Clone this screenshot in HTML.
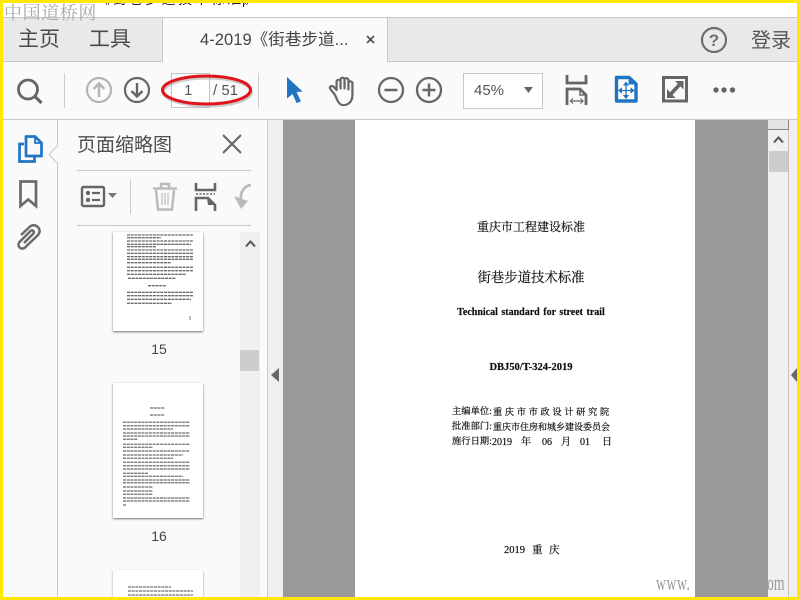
<!DOCTYPE html>
<html><head><meta charset="utf-8">
<style>
html,body{margin:0;padding:0}
body{width:800px;height:600px;overflow:hidden;position:relative;background:#fafafa;font-family:"Liberation Sans","Noto Sans CJK SC",sans-serif;color:#444}
.a{position:absolute}
.s{font-family:"Liberation Serif","Noto Serif CJK SC",serif;color:#111;white-space:nowrap;-webkit-text-stroke:.2px #111;filter:blur(.25px)}
svg{position:absolute;overflow:visible}
</style></head><body>
<!-- top band -->
<div class="a" style="left:0;top:0;width:800px;height:17px;background:#fff"></div>
<div class="a" style="left:0;top:17px;width:800px;height:1px;background:#c8c8c8"></div>
<div class="a" style="left:96px;top:-9px;font-size:14px;line-height:16px;color:#222;white-space:nowrap;letter-spacing:2.400px">《街巷步道技术标准》</div>
<div class="a" style="left:243px;top:3px;width:1px;height:4px;background:#222"></div>
<!-- tab bar -->
<div class="a" style="left:0;top:18px;width:800px;height:43px;background:#e9e9e9"></div>
<div class="a" style="left:0;top:61px;width:800px;height:1px;background:#c8c8c8"></div>
<div class="a" style="left:162px;top:18px;width:226px;height:44px;background:#fafafa;border-left:1px solid #c8c8c8;border-right:1px solid #c8c8c8;box-sizing:border-box"></div>
<div class="a" style="left:4px;top:3px;font-size:18px;line-height:20px;color:#a8a8a8;letter-spacing:.6px;font-family:'Liberation Serif','Noto Serif CJK SC',serif;white-space:nowrap">中国道桥网</div>
<div class="a" style="left:18px;top:26px;font-size:21px;line-height:28px;color:#4a4a4a">主页</div>
<div class="a" style="left:89px;top:26px;font-size:21px;line-height:28px;color:#4a4a4a">工具</div>
<div class="a" style="left:200px;top:29px;font-size:16.600px;line-height:22px;color:#444;white-space:nowrap">4-2019《街巷步道...</div>
<svg style="left:366px;top:35px" width="10" height="10"><path d="M1 1L8 8M8 1L1 8" stroke="#555" stroke-width="1.800"/></svg>
<svg style="left:701px;top:27px" width="27" height="27"><circle cx="13" cy="13" r="12" fill="none" stroke="#6e6e6e" stroke-width="2.200"/><text x="13" y="19" font-size="17" font-weight="bold" text-anchor="middle" fill="#6e6e6e" font-family="Liberation Sans">?</text></svg>
<div class="a" style="left:751px;top:27px;font-size:20px;line-height:28px;color:#555;white-space:nowrap">登录</div>
<!-- toolbar -->
<div class="a" style="left:0;top:119px;width:800px;height:1px;background:#c8c8c8"></div>
<svg style="left:16px;top:78px" width="26" height="26"><circle cx="12" cy="11.500" r="9.500" fill="none" stroke="#666" stroke-width="2.800"/><path d="M18.500 18L25.500 25" stroke="#666" stroke-width="3.200"/></svg>
<div class="a" style="left:64px;top:73px;width:1px;height:35px;background:#ccc"></div>
<svg style="left:86px;top:77px" width="26" height="26"><circle cx="13" cy="13" r="12" fill="none" stroke="#b4b4b4" stroke-width="2.200"/><path d="M13 20V6.500M7.500 12L13 6.500L18.500 12" fill="none" stroke="#b4b4b4" stroke-width="2.400"/></svg>
<svg style="left:124px;top:77px" width="26" height="26"><circle cx="13" cy="13" r="12" fill="none" stroke="#666" stroke-width="2.200"/><path d="M13 6V19.500M7.500 14L13 19.500L18.500 14" fill="none" stroke="#666" stroke-width="2.400"/></svg>
<div class="a" style="left:171px;top:73px;width:37px;height:33px;background:#fff;border:1px solid #c4c4c4"></div>
<div class="a" style="left:184px;top:81px;font-size:15px;line-height:20px;color:#555">1</div>
<div class="a" style="left:213px;top:81px;font-size:15px;line-height:20px;color:#555;white-space:nowrap">/ 51</div>
<svg style="left:160px;top:74px" width="94" height="34"><ellipse cx="47.500" cy="18" rx="44" ry="14" fill="none" stroke="#999" stroke-width="3" opacity=".5"/><ellipse cx="46.500" cy="16" rx="44" ry="14" fill="none" stroke="#e0141c" stroke-width="3"/></svg>
<div class="a" style="left:258px;top:73px;width:1px;height:35px;background:#ccc"></div>
<svg style="left:286px;top:76px" width="18" height="28"><path d="M1 1L16.500 15.500L10.500 16L15 25.500L10.500 27L6.500 18L1 22.500Z" fill="#1f74c4"/></svg>
<svg style="left:327px;top:76px" width="30" height="30"><g transform="scale(1.130 1.040)"><path d="M7 18L3 12.500C1.500 10.500 4 8.500 6 10.500L8.500 13.500V5.500C8.500 3 12 3 12 5.500V12V3.500C12 1 15.500 1 15.500 3.500V12V4C15.500 1.500 19 1.500 19 4V13V7C19 4.500 22.500 4.500 22.500 7V18C22.500 24 19.500 28 14.500 28C10.500 28 9 23 7 18Z" fill="none" stroke="#666" stroke-width="2" stroke-linejoin="round"/></g></svg>
<svg style="left:378px;top:77px" width="26" height="26"><circle cx="13" cy="13" r="12" fill="none" stroke="#666" stroke-width="2.300"/><path d="M6.500 13H19.500" stroke="#666" stroke-width="2.500"/></svg>
<svg style="left:416px;top:77px" width="26" height="26"><circle cx="13" cy="13" r="12" fill="none" stroke="#666" stroke-width="2.300"/><path d="M6.500 13H19.500M13 6.500V19.500" stroke="#666" stroke-width="2.500"/></svg>
<div class="a" style="left:463px;top:73px;width:78px;height:34px;background:#fff;border:1px solid #c8c8c8"></div>
<div class="a" style="left:474px;top:81px;font-size:15px;line-height:20px;color:#555">45%</div>
<svg style="left:524px;top:87px" width="10" height="7"><path d="M0 0H9L4.500 6Z" fill="#666"/></svg>
<svg style="left:565px;top:74px" width="24" height="32"><path d="M2 1V9H21V1" fill="none" stroke="#666" stroke-width="2.800"/><path d="M2 31V15H15L21 21V31" fill="none" stroke="#666" stroke-width="2.800"/><path d="M15 15V21H21" fill="none" stroke="#666" stroke-width="1.500"/><path d="M5.500 27H18M8 24.500L5.500 27L8 29.500M15.500 24.500L18 27L15.500 29.500" fill="none" stroke="#666" stroke-width="1.200"/></svg>
<svg style="left:614px;top:75px" width="24" height="28"><path d="M2.500 2.500H15L22 9V26H2.500Z" fill="#fff" stroke="#1f74c4" stroke-width="3.400" stroke-linejoin="round"/><path d="M15 2V9H22" fill="#1f74c4" stroke="#1f74c4" stroke-width="1"/><path d="M12 9V22M5.500 15.500H18.500" stroke="#1f74c4" stroke-width="1.300"/><path d="M12 6.500L8.800 10.500H15.200ZM12 24L8.800 20H15.200ZM4 15.500L8 12.300V18.700ZM20.500 15.500L16.500 12.300V18.700Z" fill="#1f74c4"/></svg>
<svg style="left:662px;top:76px" width="26" height="27"><rect x="1.500" y="1.500" width="23" height="23.500" fill="none" stroke="#666" stroke-width="3"/><path d="M7 20L19 7" stroke="#666" stroke-width="3.600"/><path d="M13 5H21.500V13.500ZM5 13V22H13.500Z" fill="#666"/></svg>
<svg style="left:712px;top:86px" width="25" height="8"><circle cx="4" cy="4" r="2.700" fill="#666"/><circle cx="12" cy="4" r="2.700" fill="#666"/><circle cx="20.500" cy="4" r="2.700" fill="#666"/></svg>
<!-- left rail -->
<div class="a" style="left:57px;top:120px;width:1px;height:480px;background:#c8c8c8"></div>
<svg style="left:48px;top:145px" width="11" height="20"><path d="M10 0L1 9.500L10 19" fill="#fafafa" stroke="#c8c8c8"/></svg>
<svg style="left:17px;top:134px" width="27" height="30"><path d="M7 10H2.500V27.500H17.500V23" fill="none" stroke="#1f74c4" stroke-width="2.700"/><path d="M9 2.500H18L24.500 9V22H9Z" fill="#fafafa" stroke="#1f74c4" stroke-width="2.700" stroke-linejoin="round"/><path d="M18 2.500V9H24.500" fill="none" stroke="#1f74c4" stroke-width="1.800"/></svg>
<svg style="left:19px;top:180px" width="19" height="29"><path d="M1.500 1.500H17V26L9.250 19.500L1.500 26Z" fill="none" stroke="#6a6a6a" stroke-width="2.700"/></svg>
<svg style="left:15px;top:223px" width="27" height="28"><path d="M9 20L18 11C20 9 18 6 15.500 8L5 18.500C1 22.500 6 28 10 24.500L23 12C28 6 20 -1 14.500 4L6 12" fill="none" stroke="#6a6a6a" stroke-width="2.500"/></svg>
<!-- panel -->
<div class="a" style="left:77px;top:132px;font-size:19px;line-height:28px;color:#4d4d4d;white-space:nowrap">页面缩略图</div>
<svg style="left:222px;top:134px" width="20" height="20"><path d="M1 1L19 19M19 1L1 19" stroke="#666" stroke-width="2.100"/></svg>
<div class="a" style="left:77px;top:170px;width:174px;height:1px;background:#c8c8c8"></div>
<div class="a" style="left:77px;top:225px;width:174px;height:1px;background:#c8c8c8"></div>
<svg style="left:80px;top:185px" width="38" height="24"><rect x="2" y="2" width="22" height="19" rx="1.500" fill="none" stroke="#666" stroke-width="2.400"/><circle cx="8" cy="8" r="2.200" fill="#666"/><circle cx="8" cy="15" r="2.200" fill="#666"/><path d="M12 8H20M12 15H20" stroke="#666" stroke-width="2.200"/><path d="M28 8H37L32.500 13Z" fill="#777"/></svg>
<div class="a" style="left:130px;top:179px;width:1px;height:35px;background:#ccc"></div>
<svg style="left:152px;top:182px" width="26" height="29"><path d="M1 6.500H25M9 6V2H17V6" fill="none" stroke="#bbb" stroke-width="2.400"/><path d="M4 8L6 27.500H20L22 8" fill="none" stroke="#bbb" stroke-width="2.500"/><path d="M10 11V23M13 11V23M16 11V23" stroke="#bbb" stroke-width="1.200"/></svg>
<svg style="left:194px;top:183px" width="23" height="28"><path d="M2 0V7H21V0" fill="none" stroke="#666" stroke-width="2.600"/><path d="M2 11H21" stroke="#666" stroke-width="1.600" stroke-dasharray="2 1.500"/><path d="M2 28V15H14L21 22V28" fill="none" stroke="#666" stroke-width="2.600"/><path d="M13 15L14 22H21" fill="#666"/></svg>
<svg style="left:233px;top:183px" width="18" height="28"><path d="M18 2C11 3 7 9 8 17" fill="none" stroke="#bbb" stroke-width="2.800"/><path d="M1 13L8 26L15 18Z" fill="#bbb"/></svg>
<!-- thumbs -->
<div class="a" style="left:113px;top:232px;width:90px;height:99px;background:#fff;box-shadow:0 1px 2px rgba(0,0,0,.55)"></div>
<svg style="left:126px;top:232px;filter:blur(.3px)" width="68" height="90">
<g stroke="#333" stroke-width="1.300" opacity=".72" stroke-dasharray="3 .7">
<path d="M1 3H67M1 5.700H35M1 9H67M1 12.300H65M1 14.700H30M1 18H67M1 21.300H67M1 24.700H67M1 27.300H67M1 30.700H45M1 35.300H67M1 38.700H67M1 42.300H60M2 46.300H50M22 53.700H40M1 60.300H67M1 63.700H67M1 67.300H65M1 71.300H46"/>
</g><path d="M64 84V88" stroke="#777"/></svg>
<div class="a" style="left:113px;top:339px;width:90px;text-align:center;font-size:14px;line-height:20px;color:#444;padding-left:1px">15</div>
<div class="a" style="left:113px;top:383px;width:90px;height:135px;background:#fff;box-shadow:0 1px 2px rgba(0,0,0,.55)"></div>
<svg style="left:123px;top:405px;filter:blur(.3px)" width="70" height="110">
<g stroke="#333" stroke-width="1.250" opacity=".72" stroke-dasharray="3 .7">
<path d="M27 3H42M27 10H41"/>
<path d="M0 17.300H67M0 20.700H67M0 24H50M0 28H67M0 31H67M0 34.300H15M0 39.300H67M0 42.300H30M0 46H67M0 50H60M0 53.300H50M0 57.300H67M0 60.700H67M0 64H67M0 68.300H25M0 71.300H60M0 75H67M0 77.700H67M0 82H30M0 86H30M0 89.300H30M0 93H67M0 96H67M0 100H3"/>
</g></svg>
<div class="a" style="left:113px;top:526px;width:90px;text-align:center;font-size:14px;line-height:20px;color:#444;padding-left:1px">16</div>
<div class="a" style="left:113px;top:570px;width:90px;height:30px;background:#fff;box-shadow:0 1px 2px rgba(0,0,0,.4)"></div>
<svg style="left:126px;top:585px;filter:blur(.3px)" width="68" height="14"><path d="M2 2H45M2 6H67M2 10H67" stroke="#333" stroke-width="1.300" opacity=".7" stroke-dasharray="3 .7"/></svg>
<!-- thumb scrollbar -->
<div class="a" style="left:240px;top:232px;width:20px;height:368px;background:#f0f0f0"></div>
<svg style="left:245px;top:240px" width="11" height="8"><path d="M1 6.500L5.500 1.500L10 6.500" fill="none" stroke="#555" stroke-width="2"/></svg>
<div class="a" style="left:240px;top:350px;width:19px;height:21px;background:#cdcdcd"></div>
<!-- gutter -->
<div class="a" style="left:267px;top:120px;width:1px;height:480px;background:#c8c8c8"></div>
<div class="a" style="left:268px;top:120px;width:15px;height:480px;background:#efefef"></div>
<svg style="left:271px;top:368px" width="9" height="15"><path d="M8 0V14L0 7Z" fill="#666"/></svg>
<!-- document -->
<div class="a" style="left:283px;top:120px;width:485px;height:480px;background:#999"></div>
<div class="a" style="left:355px;top:120px;width:340px;height:480px;background:#fff"></div>
<div class="a s" style="left:355px;width:352px;text-align:center;top:218px;font-size:12px;line-height:18px">重庆市工程建设标准</div>
<div class="a s" style="left:355px;width:352px;text-align:center;top:268px;font-size:13.400px;line-height:20px">街巷步道技术标准</div>
<div class="a s" style="left:355px;width:352px;text-align:center;top:306px;font-size:10px;line-height:14px;font-weight:bold;word-spacing:1px">Technical standard for street trail</div>
<div class="a s" style="left:355px;width:352px;text-align:center;top:361px;font-size:10.500px;line-height:14px;font-weight:bold">DBJ50/T-324-2019</div>
<div class="a s" style="left:452px;top:405px;font-size:9.300px;line-height:15px">主编单位:</div>
<div class="a s" style="left:493px;top:405px;font-size:9.200px;line-height:15px;letter-spacing:2.700px">重庆市市政设计研究院</div>
<div class="a s" style="left:452px;top:420px;font-size:9.300px;line-height:15px">批准部门:</div>
<div class="a s" style="left:493px;top:420px;font-size:9px;line-height:15px">重庆市住房和城乡建设委员会</div>
<div class="a s" style="left:452px;top:435px;font-size:9.300px;line-height:15px">施行日期:</div>
<div class="a s" style="left:492px;top:435px;font-size:10px;line-height:15px">2019</div>
<div class="a s" style="left:521px;top:435px;font-size:10px;line-height:15px">年</div>
<div class="a s" style="left:542px;top:435px;font-size:10px;line-height:15px">06</div>
<div class="a s" style="left:561px;top:435px;font-size:10px;line-height:15px">月</div>
<div class="a s" style="left:580px;top:435px;font-size:10px;line-height:15px">01</div>
<div class="a s" style="left:602px;top:435px;font-size:10px;line-height:15px">日</div>
<div class="a s" style="left:504px;top:543px;font-size:10.500px;line-height:15px">2019</div>
<div class="a s" style="left:532px;top:543px;font-size:10.500px;line-height:15px">重</div>
<div class="a s" style="left:549px;top:543px;font-size:10.500px;line-height:15px">庆</div>
<!-- right scroll -->
<div class="a" style="left:768px;top:120px;width:29px;height:480px;background:#efefef"></div>
<div class="a" style="left:768px;top:120px;width:20px;height:480px;background:#f0f0f0;border-right:1px solid #c4c4c4"></div>
<div class="a" style="left:768px;top:120px;width:20px;height:9px;background:#e4e4e4;border-bottom:1px solid #888;border-right:1px solid #888"></div>
<svg style="left:773px;top:136px" width="11" height="8"><path d="M1 6.500L5.500 1.500L10 6.500" fill="none" stroke="#555" stroke-width="2"/></svg>
<div class="a" style="left:769px;top:151px;width:19px;height:21px;background:#cdcdcd"></div>
<svg style="left:791px;top:368px" width="6" height="15"><path d="M6 0V14L0 7Z" fill="#666"/></svg>
<!-- watermark -->
<div class="a" style="left:656px;top:570px;font-family:'Liberation Serif',serif;font-size:22px;line-height:26px;color:#999;transform:scaleX(.62);transform-origin:0 0;white-space:nowrap;letter-spacing:1px">www.</div>
<div class="a" style="left:767px;top:570px;font-family:'Liberation Serif',serif;font-size:22px;line-height:26px;color:#999;transform:scaleX(.62);transform-origin:0 0;white-space:nowrap">om</div>
<!-- yellow frame -->
<div class="a" style="left:0;top:0;width:800px;height:3px;background:#ffe800"></div>
<div class="a" style="left:0;top:597px;width:800px;height:3px;background:#ffe800"></div>
<div class="a" style="left:0;top:0;width:3px;height:600px;background:#ffe800"></div>
<div class="a" style="left:797px;top:0;width:3px;height:600px;background:#ffe800"></div>
</body></html>
